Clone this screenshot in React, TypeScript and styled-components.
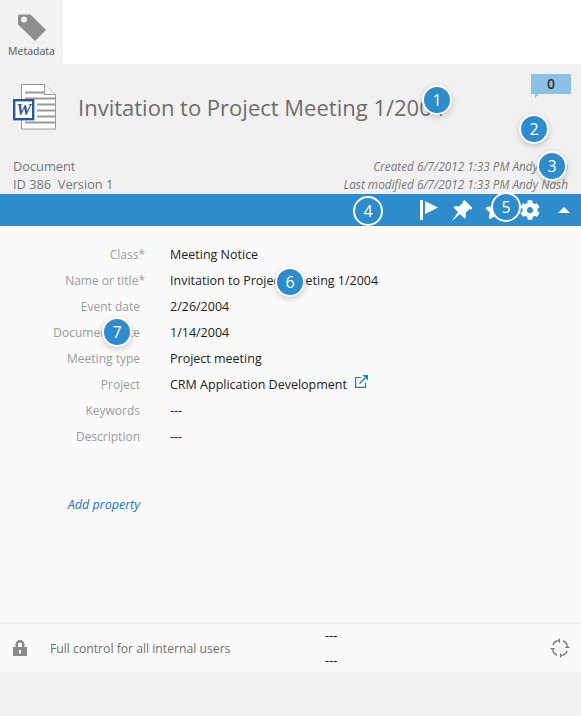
import React from 'react';
import styled, { createGlobalStyle } from 'styled-components';
import { FaCog, FaStar } from 'react-icons/fa';

const properties = [
  { label: 'Class*', value: 'Meeting Notice', required: true },
  { label: 'Name or title*', value: 'Invitation to Project Meeting 1/2004', required: true },
  { label: 'Event date', value: '2/26/2004' },
  { label: 'Document date', value: '1/14/2004' },
  { label: 'Meeting type', value: 'Project meeting' },
  { label: 'Project', value: 'CRM Application Development', link: true },
  { label: 'Keywords', value: '---' },
  { label: 'Description', value: '---' },
];

const callouts = [
  { n: 1, x: 437, y: 100 },
  { n: 2, x: 534, y: 129 },
  { n: 3, x: 552, y: 166 },
  { n: 6, x: 290, y: 282 },
  { n: 7, x: 117, y: 332 },
];

export default function App(): React.ReactElement {
  return (
    <Page>
      <GlobalStyle />
      <Tabs>
        <Tab>
          <svg width="30" height="30" viewBox="0 0 30 30">
            <path d="M2 1.500h11.500L29 17 18 28 1 11.500V2.500z" fill="#8e8e8e" />
            <circle cx="7" cy="6.500" r="3" fill="#f2f2f2" />
          </svg>
          <TabLabel>Metadata</TabLabel>
        </Tab>
      </Tabs>
      <Header>
        <TitleRow>
          <DocIcon width="44" height="46" viewBox="0 0 44 46">
            <path d="M8.500 .5h23l11 10v34.500h-34z" fill="#fff" stroke="#9a9a9a" />
            <path d="M31.500 .5v10h11" fill="#f2f2f2" stroke="#9a9a9a" />
            <path d="M12 8.500h19M12 14.500h30M24 20.500h18M24 26.500h18M24 32.500h18M12 38.500h30" stroke="#999" strokeWidth="2" />
            <rect x="1.200" y="16.200" width="19" height="19" fill="#fff" stroke="#2b579a" strokeWidth="2.400" />
            <text x="10.700" y="31" textAnchor="middle" fontFamily="Liberation Serif, serif" fontStyle="italic" fontWeight="700" fontSize="17" fill="#2b579a">W</text>
          </DocIcon>
          <Title>Invitation to Project Meeting 1/2004</Title>
          <CommentBubble>0</CommentBubble>
        </TitleRow>
        <InfoRow>
          <DocKind>
            <div>Document</div>
            <div>ID 386&nbsp; Version 1</div>
          </DocKind>
          <Dates>
            <div>Created 6/7/2012 1:33 PM Andy Nash</div>
            <div>Last modified 6/7/2012 1:33 PM Andy Nash</div>
          </Dates>
        </InfoRow>
      </Header>
      <ActionBar>
        <ActionSlot $gap={11}>
          <svg width="20" height="20" viewBox="0 0 20 20">
            <path d="M0 0h3v20H0zM5 1l13 6.500L5 14z" fill="#fff" />
          </svg>
        </ActionSlot>
        <ActionSlot $gap={12}>
          <svg width="22" height="23" viewBox="0 0 22 23">
            <path d="M13.500 1l8 8-1.500 1.500-1.500-.5-4 4 .5 4L13.500 19.500 9 15 .5 22.500 7 13 2.500 8.500 4 7l4 .5 4-4-.5-1z" fill="#fff" />
          </svg>
        </ActionSlot>
        <ActionSlot $gap={15}>
          <FaStar size={20} color="#fff" />
        </ActionSlot>
        <ActionSlot $gap={18}>
          <FaCog size={20} color="#fff" />
        </ActionSlot>
        <Caret />
      </ActionBar>
      <Body>
        <PropertyList>
          {properties.map((p) => (
            <PropertyRow key={p.label}>
              <PropertyLabel $required={p.required}>{p.label}</PropertyLabel>
              <PropertyValue>
                {p.value}
                {p.link && (
                  <LinkIcon width="13" height="13" viewBox="0 0 13 13">
                    <path d="M6 2.500H.6v9.900h9.900V7.500" fill="none" stroke="#1d7fc9" strokeWidth="1.200" />
                    <path d="M4.500 8.500L10 3" fill="none" stroke="#1d7fc9" strokeWidth="1.500" />
                    <path d="M7.500 0H13v5.500z" fill="#1d7fc9" />
                  </LinkIcon>
                )}
              </PropertyValue>
            </PropertyRow>
          ))}
        </PropertyList>
        <AddProperty>Add property</AddProperty>
      </Body>
      <Footer>
        <LockIcon width="14" height="16" viewBox="0 0 14 16">
          <path fillRule="evenodd" d="M2.500 7V4.500a4.500 4.500 0 0 1 9 0V7H14v9H0V7zM5 7h4V4.500a2 2 0 0 0-4 0zM6 10v3.500h2V10z" fill="#8a8a8a" />
        </LockIcon>
        <Permission>Full control for all internal users</Permission>
        <Dashes>
          <div>---</div>
          <div>---</div>
        </Dashes>
        <svg width="20" height="20" viewBox="0 0 20 20" fill="none" stroke="#808080" strokeWidth="1.600">
          <path d="M7 2.800A7.700 7.700 0 0 0 2.800 7M13 2.800A7.700 7.700 0 0 1 17.200 7M17.200 13A7.700 7.700 0 0 1 13 17.200M7 17.200A7.700 7.700 0 0 1 2.800 13" />
          <path d="M10 0l-3 2.800L10 5zM20 10l-2.800-3L15 10zM10 20l3-2.800L10 15zM0 10l2.800 3L5 10z" fill="#808080" stroke="none" />
        </svg>
      </Footer>
      <Bottom />
      {callouts.map((c) => (
        <Callout key={c.n} style={{ left: c.x, top: c.y }}>{c.n}</Callout>
      ))}
      <Callout $outlined style={{ left: 368, top: 211 }}>4</Callout>
      <Callout $outlined style={{ left: 506, top: 207 }}>5</Callout>
    </Page>
  );
}

const GlobalStyle = createGlobalStyle`
  html, body {
    margin: 0;
    padding: 0;
    background: #fff;
  }
  * {
    box-sizing: border-box;
  }
`;

const Page = styled.div`
  position: relative;
  width: 581px;
  height: 716px;
  overflow: hidden;
  display: flex;
  flex-direction: column;
  font-family: 'Open Sans', 'Noto Sans', sans-serif;
  font-size: 12px;
`;

const Tabs = styled.div`
  height: 64px;
  background: #fff;
  display: flex;
`;

const Tab = styled.div`
  width: 63px;
  background: #f2f2f2;
  display: flex;
  flex-direction: column;
  align-items: center;
  padding-top: 13px;
`;

const TabLabel = styled.div`
  font-size: 10.5px;
  line-height: 16px;
  color: #555;
  white-space: nowrap;
`;

const Header = styled.div`
  height: 130px;
  background: #f1f1f1;
  display: flex;
  flex-direction: column;
  justify-content: space-between;
  padding: 20px 13px 1px 13px;
`;

const TitleRow = styled.div`
  position: relative;
  display: flex;
  align-items: flex-start;
`;

const DocIcon = styled.svg`
  flex: none;
  margin-right: 21px;
`;

const Title = styled.div`
  font-size: 22px;
  line-height: 30px;
  margin-top: 8px;
  color: #6d6d6d;
  white-space: nowrap;
`;

const CommentBubble = styled.div`
  position: absolute;
  top: -10px;
  right: -3px;
  width: 40px;
  height: 20px;
  background: #8cc1e6;
  color: #333;
  font-weight: 600;
  font-size: 14px;
  line-height: 20px;
  text-align: center;

  &::after {
    content: '';
    position: absolute;
    left: 4px;
    top: 20px;
    border-top: 4px solid #8cc1e6;
    border-right: 4px solid transparent;
  }
`;

const InfoRow = styled.div`
  display: flex;
  justify-content: space-between;
  align-items: flex-end;
`;

const DocKind = styled.div`
  font-size: 12.800px;
  line-height: 18px;
  color: #777;
`;

const Dates = styled.div`
  font-size: 11.800px;
  line-height: 18px;
  font-style: italic;
  color: #777;
  text-align: right;
`;

const ActionBar = styled.div`
  height: 32px;
  background: #2f8ccc;
  display: flex;
  align-items: center;
  justify-content: flex-end;
  padding-right: 11px;
`;

const ActionSlot = styled.div<{ $gap: number }>`
  display: flex;
  flex: none;
  margin-right: ${(p) => p.$gap}px;
`;

const Caret = styled.div`
  width: 0;
  height: 0;
  border-left: 6px solid transparent;
  border-right: 6px solid transparent;
  border-bottom: 6px solid #fff;
`;

const Body = styled.div`
  flex: 1;
  background: #fafafa;
  padding-top: 15px;
`;

const PropertyList = styled.div`
  display: flex;
  flex-direction: column;
`;

const PropertyRow = styled.div`
  height: 26px;
  display: flex;
  align-items: center;
`;

const PropertyLabel = styled.div<{ $required?: boolean }>`
  flex: none;
  width: ${(p) => (p.$required ? 145 : 140)}px;
  margin-right: ${(p) => (p.$required ? 25 : 30)}px;
  text-align: right;
  color: #9b9b9b;
  white-space: nowrap;
`;

const PropertyValue = styled.div`
  display: flex;
  align-items: center;
  font-size: 12.500px;
  color: #222;
  white-space: nowrap;
`;

const LinkIcon = styled.svg`
  margin-left: 8px;
  margin-top: -5px;
`;

const AddProperty = styled.div`
  width: 140px;
  margin-top: 47px;
  text-align: right;
  font-style: italic;
  font-size: 12.500px;
  color: #1d6fc9;
`;

const Footer = styled.div`
  height: 50px;
  background: #fafafa;
  border-top: 2px solid #f0f0f0;
  display: flex;
  align-items: center;
  padding: 0 11px 0 13px;
`;

const LockIcon = styled.svg`
  flex: none;
  margin-right: 23px;
`;

const Permission = styled.div`
  width: 275px;
  font-size: 12.200px;
  color: #6f6f6f;
  white-space: nowrap;
`;

const Dashes = styled.div`
  flex: 1;
  font-size: 13px;
  color: #111;
  line-height: 25px;
`;

const Bottom = styled.div`
  flex: none;
  height: 44px;
  background: #f2f2f2;
`;

const Callout = styled.div<{ $outlined?: boolean }>`
  position: absolute;
  width: 30px;
  height: 30px;
  margin: -15px 0 0 -15px;
  border-radius: 50%;
  border: 2px solid #fff;
  background: #2f8ccc;
  color: #fff;
  font-size: 16px;
  line-height: 26px;
  text-align: center;
  box-shadow: ${(p) => (p.$outlined ? 'none' : '0 2px 6px rgba(0, 0, 0, 0.2)')};
`;
